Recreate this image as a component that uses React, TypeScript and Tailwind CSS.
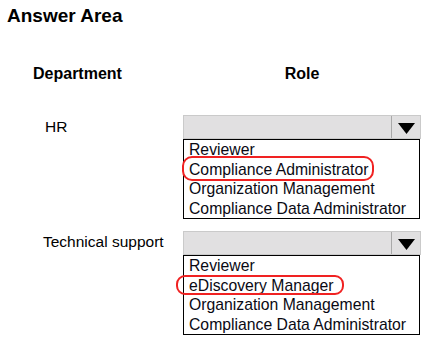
import React from "react";

type DropdownProps = {
  items: string[];
  highlight: number;
  ovalClass: string;
};

function Dropdown({ items, highlight, ovalClass }: DropdownProps) {
  return (
    <div className="w-[238px]">
      <div className="flex h-[24px] bg-[#e1e0e1] border border-[#cacaca]">
        <div className="flex-1" />
        <div className="w-[29px] border-l border-[#a9a9a9] flex items-center justify-center pt-[3px]">
          <svg width="17" height="11" viewBox="0 0 17 11">
            <polygon points="0,0 17,0 8.5,11" fill="#000" />
          </svg>
        </div>
      </div>
      <div className="w-[237px] border border-black">
        {items.map((it, i) => (
          <div key={it} className="relative pl-[5px] text-[15.75px] leading-[19.5px] text-[#0a0a14] whitespace-nowrap">
            {it}
            {i === highlight && (
              <div className={"absolute border-2 border-[#f02222] " + ovalClass} />
            )}
          </div>
        ))}
      </div>
    </div>
  );
}

export default function App() {
  return (
    <div className="w-[430px] h-[343px] bg-white text-black font-['Liberation_Sans',Arial,sans-serif] overflow-hidden">
      <div className="pl-[7px] pt-[5px] text-[19px] leading-[22px] font-bold">Answer Area</div>
      <div className="flex mt-[37px] h-[20px] text-[16px] leading-[20px] font-bold">
        <div className="w-[183px] pl-[33px]">Department</div>
        <div className="w-[238px] text-center">Role</div>
      </div>
      <div className="flex mt-[31px]">
        <div className="w-[183px] pl-[45px] pt-[2px] text-[15.5px] leading-[20px]">HR</div>
        <Dropdown
          items={["Reviewer", "Compliance Administrator", "Organization Management", "Compliance Data Administrator"]}
          highlight={1}
          ovalClass="-left-[2px] -top-[4px] w-[192px] h-[25px] rounded-[10px]"
        />
      </div>
      <div className="flex mt-[12px]">
        <div className="w-[183px] pl-[43px] pt-[1px] text-[15.5px] leading-[20px]">Technical support</div>
        <Dropdown
          items={["Reviewer", "eDiscovery Manager", "Organization Management", "Compliance Data Administrator"]}
          highlight={1}
          ovalClass="-left-[8px] -top-[1px] w-[168px] h-[20px] rounded-[9px]"
        />
      </div>
    </div>
  );
}
